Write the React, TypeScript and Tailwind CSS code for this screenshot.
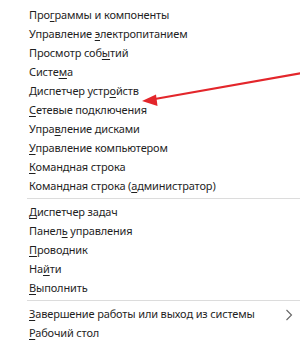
const u = (s: string) => <span className="underline underline-offset-2">{s}</span>;

type Item = { key: string; label: React.ReactNode; chevron?: boolean };

const groupA: Item[] = [
  { key: "apps", label: <>Про{u("г")}раммы и компоненты</> },
  { key: "power", label: <>Управление {u("э")}лектропитанием</> },
  { key: "events", label: <>Просмотр соб{u("ы")}тий</> },
  { key: "system", label: <>Систе{u("м")}а</> },
  { key: "devices", label: <>Диспетчер устр{u("о")}йств</> },
  { key: "net", label: <>{u("С")}етевые подключения</> },
  { key: "disks", label: <>Упра{u("в")}ление дисками</> },
  { key: "computer", label: <>{u("У")}правление компьютером</> },
  { key: "cmd", label: <>{u("К")}омандная строка</> },
  { key: "cmdadmin", label: <>Командная строка ({u("а")}дминистратор)</> },
];

const groupB: Item[] = [
  { key: "tasks", label: <>{u("Д")}испетчер задач</> },
  { key: "panel", label: <>Панел{u("ь")} управления</> },
  { key: "explorer", label: <>{u("П")}роводник</> },
  { key: "search", label: <>На{u("й")}ти</> },
  { key: "run", label: <>{u("В")}ыполнить</> },
];

const groupC: Item[] = [
  { key: "shutdown", label: <>{u("З")}авершение работы или выход из системы</>, chevron: true },
  { key: "desktop", label: <>{u("Р")}абочий стол</> },
];

function Row({ item }: { item: Item }) {
  return (
    <div className="flex h-[19px] items-center pl-[29px] pr-[7px]">
      <span className="flex-1 whitespace-nowrap">{item.label}</span>
      {item.chevron && (
        <svg width="8" height="12" viewBox="0 0 8 12">
          <path d="M1.5 1 L6.5 6 L1.5 11" fill="none" stroke="#666" strokeWidth="1.1" />
        </svg>
      )}
    </div>
  );
}

const Separator = () => <div className="mt-[2px] mb-[4px] ml-[27px] h-px bg-[#dcdcdc]" />;

export default function App() {
  return (
    <div
      className="relative h-[341px] w-[300px] overflow-hidden bg-white pt-[6px] text-[11px] tracking-[-0.15px] text-[#1f1f1f]"
      style={{ fontFamily: '"Noto Sans", "Open Sans", sans-serif' }}
    >
      {groupA.map((it) => (
        <Row key={it.key} item={it} />
      ))}
      <Separator />
      {groupB.map((it) => (
        <Row key={it.key} item={it} />
      ))}
      <Separator />
      {groupC.map((it) => (
        <Row key={it.key} item={it} />
      ))}

      {/* red annotation arrow */}
      <svg className="pointer-events-none absolute inset-0" width="300" height="341" viewBox="0 0 300 341">
        <line x1="302" y1="73" x2="152" y2="99.5" stroke="#e3262b" strokeWidth="2.2" />
        <polygon points="142,101 156,94.5 157.5,106" fill="#e3262b" />
      </svg>
    </div>
  );
}
